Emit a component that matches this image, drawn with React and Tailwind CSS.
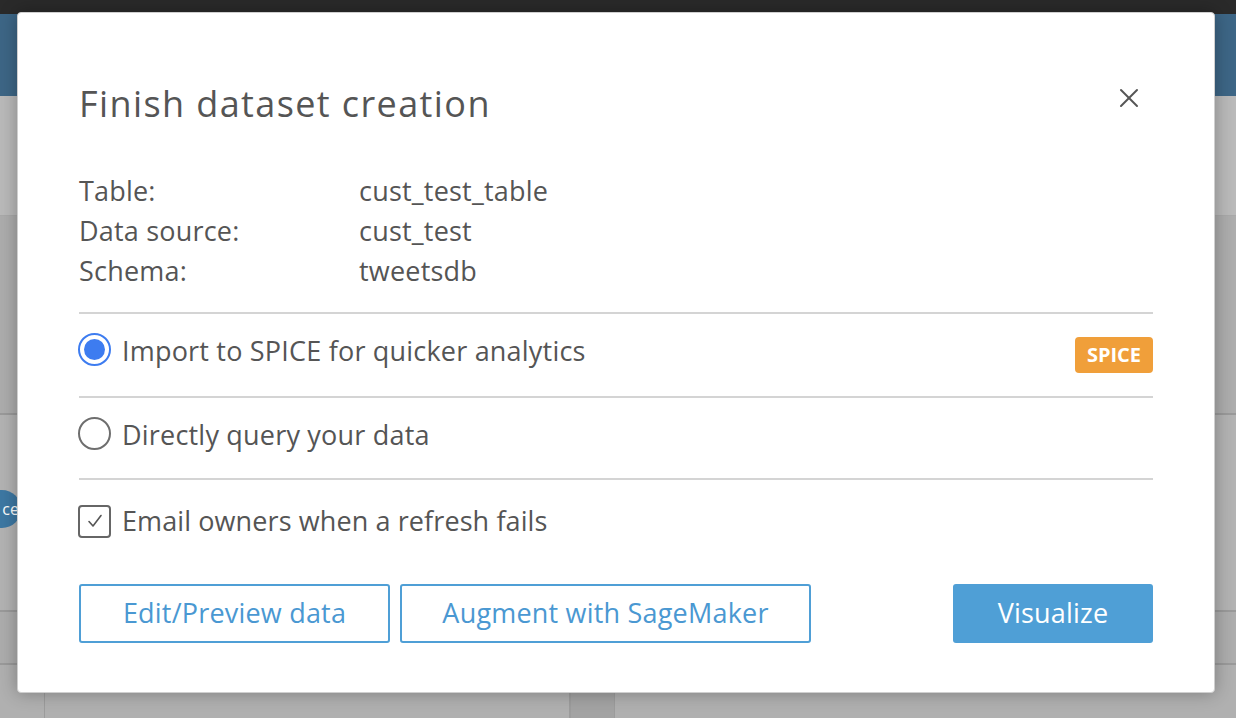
import React from 'react';
import { X } from 'lucide-react';

const font = { fontFamily: '"Open Sans", "Noto Sans", Arial, sans-serif' };

const InfoRow = ({ label, value }) => (
  <div className="flex items-center h-[40px] text-[27px] tracking-[0.2px] text-[#555555]">
    <span className="w-[280px]">{label}</span>
    <span>{value}</span>
  </div>
);

const Background = () => (
  <div className="flex flex-col w-full h-full">
    <div className="h-[14px] bg-[#2a2a2a]" />
    <div className="h-[82px] bg-[#3d6686]" />
    <div className="h-[119px] bg-[#bababa]" />
    <div className="h-[198px] bg-[#adadad] border-t border-[#a9a9a9]" />
    <div className="h-[197px] bg-[#b3b3b3] border-t-2 border-[#9a9a9a] flex items-center pb-[8px]">
      <div className="w-[21px] h-[38px] overflow-hidden rounded-r-full bg-[#3d78a3] flex items-center justify-end pr-[2px] text-[16px] text-white">
        ce
      </div>
    </div>
    <div className="h-[53px] bg-[#adadad] border-t-2 border-[#9a9a9a]" />
    <div className="flex-1 bg-[#b0b0b0] border-t-2 border-[#9a9a9a] flex">
      <div className="w-[45px] border-r border-[#9c9c9c]" />
      <div className="w-[526px] border-r-2 border-[#9c9c9c]" />
      <div className="w-[44px] border-r border-[#9c9c9c] bg-[#a3a3a3]" />
      <div className="flex-1" />
    </div>
  </div>
);

export default function App() {
  return (
    <div className="relative w-[1236px] h-[718px] overflow-hidden" style={font}>
      <Background />

      {/* Modal */}
      <div className="absolute left-[17px] top-[12px] w-[1198px] h-[681px] bg-white rounded-[4px] border border-[#cfcfcf] shadow-[0_0_18px_rgba(0,0,0,0.3)] px-[61px] pt-[66px] flex flex-col">
        <div className="flex items-center justify-between h-[50px]">
          <h1 className="text-[36px] text-[#555555] tracking-[1.4px]">Finish dataset creation</h1>
          <button className="mr-[8px] mb-[12px] text-[#555555]">
            <X size={32} strokeWidth={1.5} />
          </button>
        </div>

        <div className="mt-[42px]">
          <InfoRow label="Table:" value="cust_test_table" />
          <InfoRow label="Data source:" value="cust_test" />
          <InfoRow label="Schema:" value="tweetsdb" />
        </div>

        <div className="mt-[21px] border-t-2 border-[#d4d4d4]" />

        <div className="h-[82px] flex items-center justify-between pb-[12px]">
          <div className="flex items-center gap-[11px] -ml-[1px]">
            <span className="w-[33px] h-[33px] rounded-full border-2 border-[#3d7cf0] flex items-center justify-center">
              <span className="w-[21px] h-[21px] rounded-full bg-[#3d7cf0]" />
            </span>
            <span className="text-[27px] tracking-[0.2px] text-[#555555] pt-[4px]">Import to SPICE for quicker analytics</span>
          </div>
          <span className="w-[78px] h-[36px] mt-[12px] rounded-[4px] bg-[#f09f3a] text-white text-[20px] font-bold flex items-center justify-center">
            SPICE
          </span>
        </div>

        <div className="border-t-2 border-[#d4d4d4]" />

        <div className="h-[80px] flex items-center pb-[10px]">
          <div className="flex items-center gap-[11px] -ml-[1px]">
            <span className="w-[33px] h-[33px] rounded-full border-2 border-[#6e6e6e]" />
            <span className="text-[27px] tracking-[0.2px] text-[#555555] pt-[4px]">Directly query your data</span>
          </div>
        </div>

        <div className="border-t-2 border-[#d4d4d4]" />

        <div className="mt-[23px] h-[36px] flex items-center gap-[11px] -ml-[1px]">
          <span className="w-[33px] h-[33px] rounded-[4px] border-2 border-[#666666] flex items-center justify-center text-[#555555]">
            <svg width="16" height="14" viewBox="0 0 16 14" fill="none">
              <polyline points="2,7.5 6,12 14,1.5" stroke="currentColor" strokeWidth="1.6" strokeLinecap="round" strokeLinejoin="round" />
            </svg>
          </span>
          <span className="text-[27px] tracking-[0.1px] text-[#555555]">Email owners when a refresh fails</span>
        </div>

        <div className="mt-[45px] flex items-center">
          <button className="w-[311px] h-[59px] rounded-[3px] border-2 border-[#4f9fd6] text-[#4a98d2] text-[27px] tracking-[0.2px]">
            Edit/Preview data
          </button>
          <button className="ml-[10px] w-[411px] h-[59px] rounded-[3px] border-2 border-[#4f9fd6] text-[#4a98d2] text-[27px] tracking-[0.2px]">
            Augment with SageMaker
          </button>
          <button className="ml-auto w-[200px] h-[59px] rounded-[3px] bg-[#4f9fd6] text-white text-[27px] tracking-[0.2px]">
            Visualize
          </button>
        </div>
      </div>
    </div>
  );
}
